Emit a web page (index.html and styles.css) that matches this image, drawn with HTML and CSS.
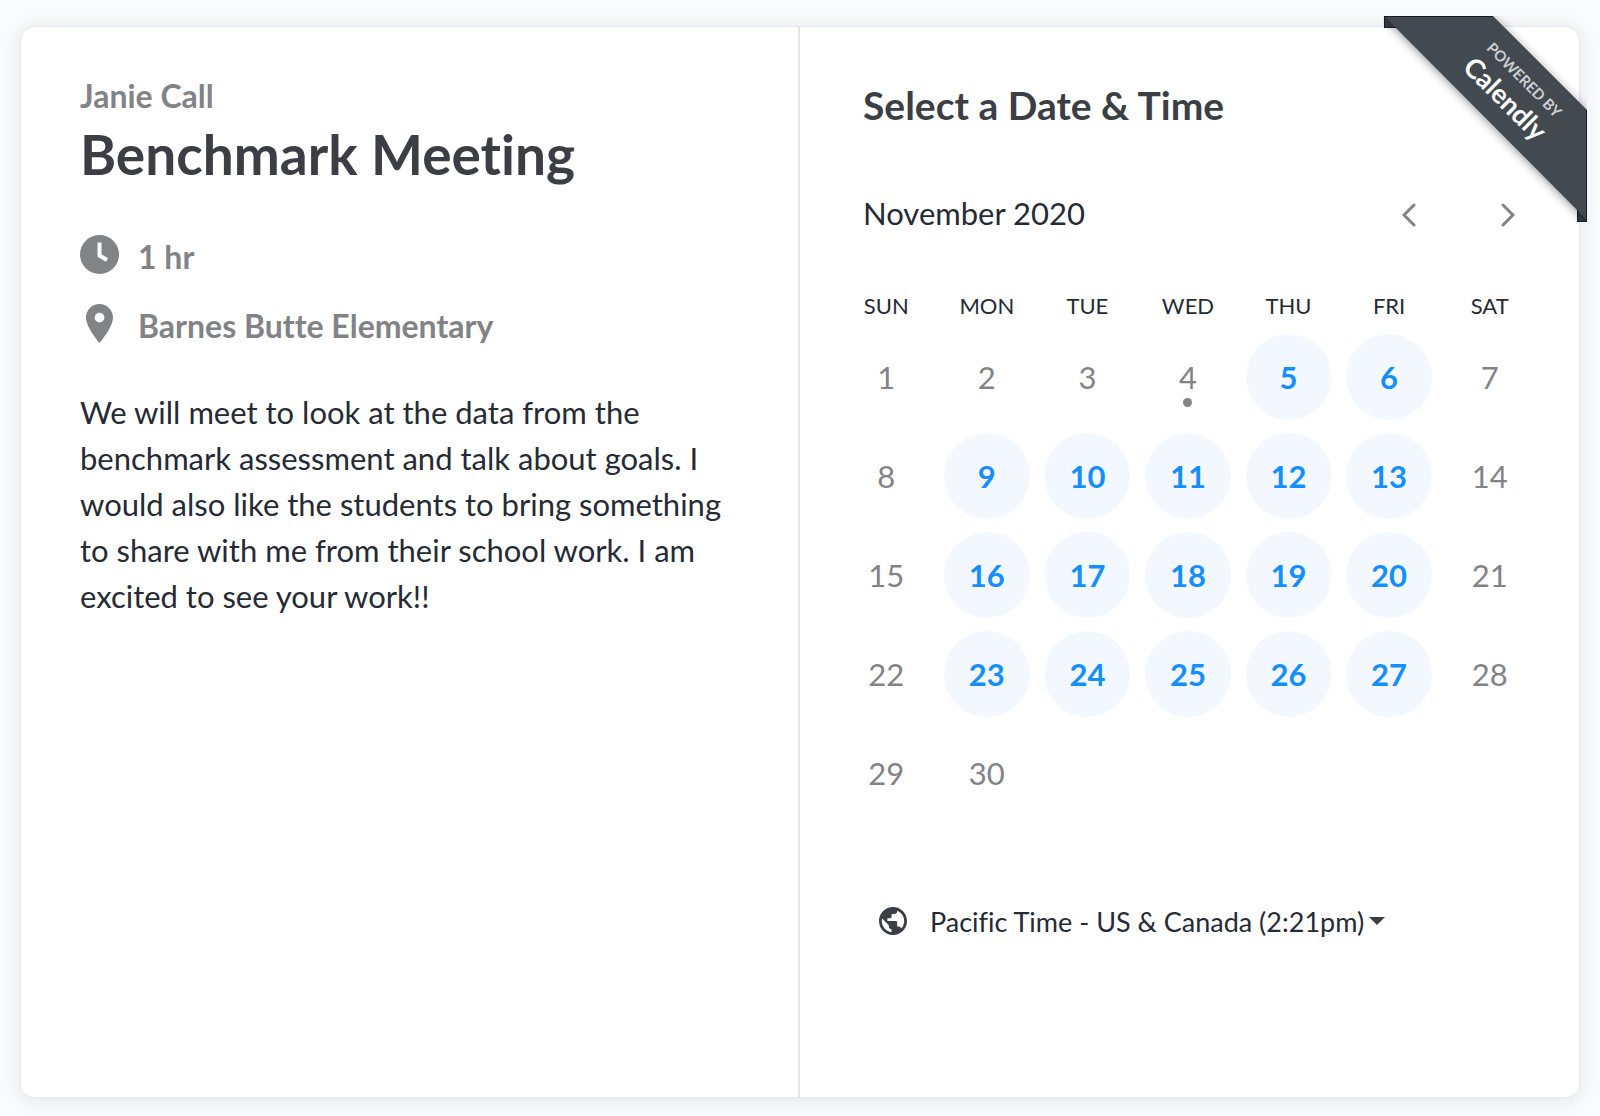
FILE: index.html
```
<!DOCTYPE html>
<html lang="en">
<head>
    <meta charset="UTF-8">
    <meta name="viewport" content="width=device-width, initial-scale=1.0">
    <title>Benchmark Meeting - Janie Call</title>
    <link rel="stylesheet" href="styles.css">
</head>
<body>
    <main class="booking">
        <section class="details">
            <p class="host">Janie Call</p>
            <h1>Benchmark Meeting</h1>
            <ul class="facts">
                <li>
                    <svg class="fact-icon" viewBox="0 0 39 39" aria-hidden="true">
                        <circle cx="19.5" cy="19.5" r="19.5"/>
                        <path class="hands" d="M19.5 7.5v13l7.5 4.5"/>
                    </svg>
                    <span>1 hr</span>
                </li>
                <li>
                    <svg class="fact-icon" viewBox="0 0 39 39" aria-hidden="true">
                        <path fill-rule="evenodd" d="M19.5 0C12 0 6 6 6 13.5C6 23.5 19.5 39 19.5 39S33 23.5 33 13.5C33 6 27 0 19.5 0zM19.5 8.7a4.9 4.9 0 1 1 0 9.8a4.9 4.9 0 1 1 0-9.8z"/>
                    </svg>
                    <span>Barnes Butte Elementary</span>
                </li>
            </ul>
            <p class="description">We will meet to look at the data from the benchmark assessment and talk about goals. I would also like the students to bring something to share with me from their school work. I am excited to see your work!!</p>
        </section>

        <section class="schedule">
            <h2>Select a Date &amp; Time</h2>
            <div class="month-bar">
                <span class="month">November 2020</span>
                <div class="month-nav">
                    <button type="button" aria-label="Previous month">
                        <svg viewBox="0 0 14 24" aria-hidden="true"><path d="M12 2L2 12l10 10"/></svg>
                    </button>
                    <button type="button" aria-label="Next month">
                        <svg viewBox="0 0 14 24" aria-hidden="true"><path d="M2 2l10 10L2 22"/></svg>
                    </button>
                </div>
            </div>

            <table class="calendar">
                <thead>
                    <tr><th>SUN</th><th>MON</th><th>TUE</th><th>WED</th><th>THU</th><th>FRI</th><th>SAT</th></tr>
                </thead>
                <tbody>
                    <tr>
                        <td><button disabled>1</button></td>
                        <td><button disabled>2</button></td>
                        <td><button disabled>3</button></td>
                        <td><button class="today" disabled>4</button></td>
                        <td><button>5</button></td>
                        <td><button>6</button></td>
                        <td><button disabled>7</button></td>
                    </tr>
                    <tr>
                        <td><button disabled>8</button></td>
                        <td><button>9</button></td>
                        <td><button>10</button></td>
                        <td><button>11</button></td>
                        <td><button>12</button></td>
                        <td><button>13</button></td>
                        <td><button disabled>14</button></td>
                    </tr>
                    <tr>
                        <td><button disabled>15</button></td>
                        <td><button>16</button></td>
                        <td><button>17</button></td>
                        <td><button>18</button></td>
                        <td><button>19</button></td>
                        <td><button>20</button></td>
                        <td><button disabled>21</button></td>
                    </tr>
                    <tr>
                        <td><button disabled>22</button></td>
                        <td><button>23</button></td>
                        <td><button>24</button></td>
                        <td><button>25</button></td>
                        <td><button>26</button></td>
                        <td><button>27</button></td>
                        <td><button disabled>28</button></td>
                    </tr>
                    <tr>
                        <td><button disabled>29</button></td>
                        <td><button disabled>30</button></td>
                        <td></td>
                        <td></td>
                        <td></td>
                        <td></td>
                        <td></td>
                    </tr>
                </tbody>
            </table>

            <div class="timezone">
                <svg class="globe" viewBox="2 2 20 20" aria-hidden="true">
                    <path d="M12 2C6.48 2 2 6.48 2 12s4.48 10 10 10 10-4.48 10-10S17.52 2 12 2zm-1 17.93c-3.95-.49-7-3.85-7-7.93 0-.62.08-1.21.21-1.79L9 15v1c0 1.1.9 2 2 2v1.93zm6.9-2.54c-.26-.81-1-1.39-1.9-1.39h-1v-3c0-.55-.45-1-1-1H8v-2h2c.55 0 1-.45 1-1V7h2c1.1 0 2-.9 2-2v-.41c2.93 1.19 5 4.06 5 7.41 0 2.08-.8 3.97-2.1 5.39z"/>
                </svg>
                <select id="timezone" aria-label="Time zone">
                    <option>Pacific Time - US &amp; Canada (2:21pm)</option>
                </select>
                <svg class="caret" viewBox="0 0 16 8" aria-hidden="true"><path d="M0 0h16L8 8z"/></svg>
            </div>
        </section>

        <a class="ribbon" href="#">
            <svg class="ribbon-shape" viewBox="0 0 204 206" aria-hidden="true">
                <path class="fold" d="M1 0h12v12H1zM194 194h10v12h-10z"/>
                <path class="band" d="M1 0h109l94 94v110z"/>
                <path class="edge" d="M1 0h109v1H1zM203 94h1v112h-1zM1 0h1v12H1zM1 11h12v1H1zM194 205h10v1h-10zM194 194h1v12h-1z"/>
            </svg>
            <span class="ribbon-text">
                <small>POWERED BY</small>
                <strong>Calendly</strong>
            </span>
        </a>
    </main>
</body>
</html>
```
FILE: styles.css
```
:root {
    --text-color: #262a35;
    --heading-color: #3c3e45;
    --muted-color: #828387;
    --link-color: #158fff;
    --day-background: #f3f8ff;
    --ribbon-color: #42494f;
}

* {
    box-sizing: border-box;
}

body {
    font-family: Lato, 'Open Sans', sans-serif;
    font-size: 31px;
    font-variant-ligatures: none;
    margin: 0;
    padding: 26px 20px 18px;
    background-color: #fafbfd;
    color: var(--text-color);
}

h1, h2, p, ul {
    margin: 0;
    padding: 0;
}

button, select {
    font: inherit;
    font-variant-ligatures: none;
    color: inherit;
    background: none;
    border: none;
    padding: 0;
    cursor: pointer;
}

.booking {
    position: relative;
    display: grid;
    grid-template-columns: 1fr 1fr;
    min-height: calc(100vh - 44px);
    background-color: #fff;
    border: 1px solid #e6e7e9;
    border-radius: 14px;
    box-shadow: 0 2px 20px rgba(20, 30, 45, 0.1);
}

/* Left side */
.details {
    padding: 49px 58px 40px 59px;
    border-right: 2px solid #e6e6e6;
}

.host {
    font-size: 32px;
    font-weight: bold;
    line-height: 40px;
    color: var(--muted-color);
}

h1 {
    font-size: 55px;
    line-height: 76px;
    color: var(--heading-color);
}

.facts {
    list-style: none;
    margin-top: 43px;
    color: var(--muted-color);
    font-size: 32px;
    font-weight: bold;
}

.facts li {
    display: flex;
    gap: 19px;
    height: 69px;
    line-height: 44px;
}

.fact-icon {
    width: 39px;
    height: 39px;
    fill: var(--muted-color);
}

.fact-icon .hands {
    fill: none;
    stroke: #fff;
    stroke-width: 4;
}

.description {
    margin-top: 16px;
    line-height: 46px;
}

/* Right side */
.schedule {
    padding: 54px 39px 40px 36px;
}

h2 {
    padding-left: 27px;
    font-size: 39px;
    line-height: 48px;
    color: var(--heading-color);
}

.month-bar {
    display: flex;
    justify-content: space-between;
    align-items: center;
    height: 48px;
    margin-top: 60px;
    padding-left: 27px;
}

.month-nav {
    display: flex;
    gap: 34px;
}

.month-nav button {
    display: flex;
    align-items: flex-end;
    justify-content: center;
    width: 65px;
    height: 28px;
}

.month-nav svg {
    width: 14px;
    height: 24px;
    fill: none;
    stroke: var(--muted-color);
    stroke-width: 3;
    stroke-linecap: round;
}

.calendar {
    width: 100%;
    margin-top: 50px;
    table-layout: fixed;
    border-collapse: collapse;
}

.calendar th {
    padding: 0 0 2px;
    font-size: 22px;
    font-weight: normal;
    line-height: 38px;
}

.calendar td {
    height: 99px;
    padding: 0;
    text-align: center;
}

.calendar td button {
    position: relative;
    width: 86px;
    height: 86px;
    border-radius: 50%;
    background-color: var(--day-background);
    color: var(--link-color);
    font-weight: bold;
    vertical-align: middle;
}

.calendar td button:disabled {
    background: none;
    color: var(--muted-color);
    font-weight: normal;
    cursor: default;
}

.calendar .today::after {
    content: '';
    position: absolute;
    bottom: 13px;
    left: 50%;
    width: 9px;
    height: 9px;
    margin-left: -5px;
    border-radius: 50%;
    background-color: var(--muted-color);
}

.timezone {
    display: flex;
    align-items: center;
    margin-top: 77px;
    padding-left: 43px;
    font-size: 27px;
}

.globe {
    width: 28px;
    height: 28px;
    margin-right: 23px;
    fill: var(--heading-color);
}

.timezone select {
    appearance: none;
    height: 44px;
}

.caret {
    width: 16px;
    height: 8px;
    margin-left: 4px;
    fill: var(--heading-color);
    pointer-events: none;
}

/* Corner ribbon */
.ribbon {
    position: absolute;
    top: -11px;
    right: -8px;
    width: 204px;
    height: 206px;
    overflow: hidden;
    color: #fff;
    text-decoration: none;
}

.ribbon-shape {
    display: block;
    width: 204px;
    height: 206px;
}

.ribbon-shape .fold {
    fill: #353d43;
}

.ribbon-shape .band {
    fill: var(--ribbon-color);
    filter: drop-shadow(0 2px 5px rgba(0, 0, 0, 0.4));
}

.ribbon-shape .edge {
    fill: #101c2a;
}

.ribbon-text {
    position: absolute;
    top: 47px;
    left: 61px;
    width: 140px;
    text-align: center;
    transform: rotate(45deg);
}

.ribbon-text small,
.ribbon-text strong {
    display: block;
}

.ribbon-text small {
    font-size: 15px;
    font-weight: bold;
    line-height: 24px;
    color: #ccced0;
}

.ribbon-text strong {
    font-size: 27px;
    line-height: 30px;
}
```
